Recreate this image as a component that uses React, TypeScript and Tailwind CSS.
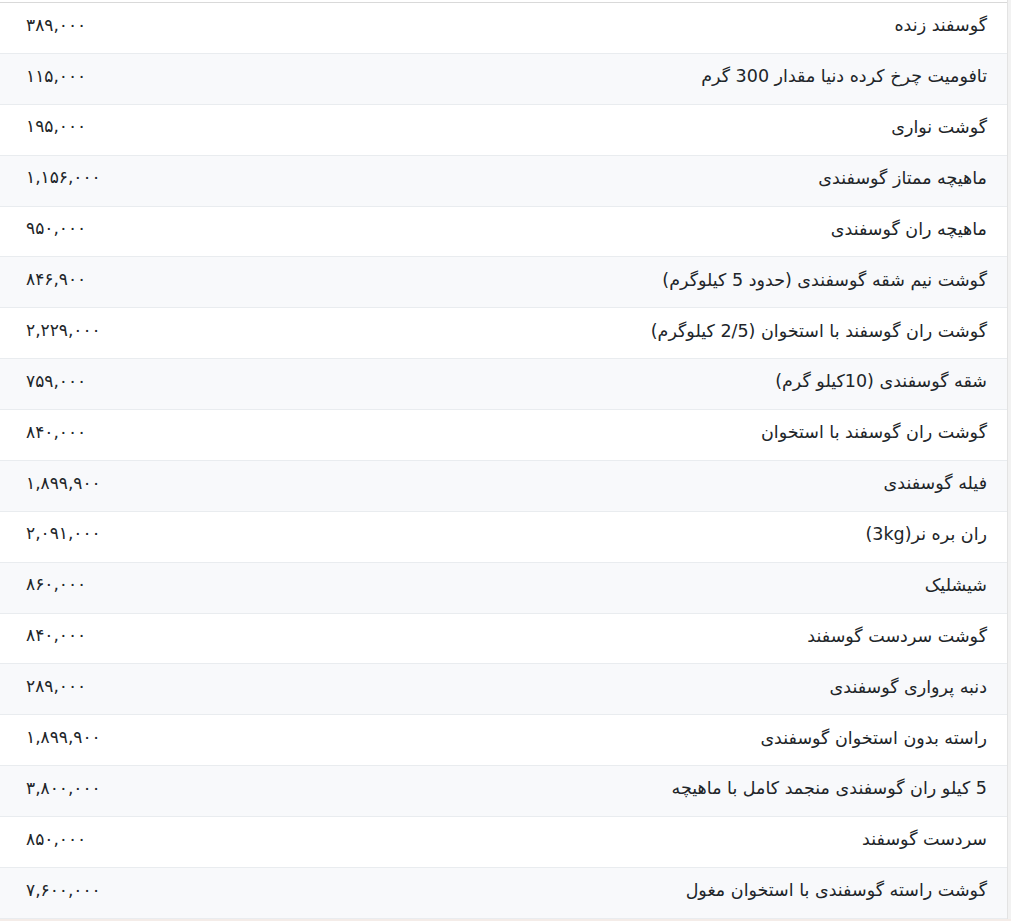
import React from 'react';

const rows: [string, string][] = [
  ['گوسفند زنده', '۳۸۹,۰۰۰'],
  ['تافومیت چرخ کرده دنیا مقدار 300 گرم', '۱۱۵,۰۰۰'],
  ['گوشت نواری', '۱۹۵,۰۰۰'],
  ['ماهیچه ممتاز گوسفندی', '۱,۱۵۶,۰۰۰'],
  ['ماهیچه ران گوسفندی', '۹۵۰,۰۰۰'],
  ['گوشت نیم شقه گوسفندی (حدود 5 کیلوگرم)', '۸۴۶,۹۰۰'],
  ['گوشت ران گوسفند با استخوان (2/5 کیلوگرم)', '۲,۲۲۹,۰۰۰'],
  ['شقه گوسفندی (10کیلو گرم)', '۷۵۹,۰۰۰'],
  ['گوشت ران گوسفند با استخوان', '۸۴۰,۰۰۰'],
  ['فیله گوسفندی', '۱,۸۹۹,۹۰۰'],
  ['ران بره نر(3kg)', '۲,۰۹۱,۰۰۰'],
  ['شیشلیک', '۸۶۰,۰۰۰'],
  ['گوشت سردست گوسفند', '۸۴۰,۰۰۰'],
  ['دنبه پرواری گوسفندی', '۲۸۹,۰۰۰'],
  ['راسته بدون استخوان گوسفندی', '۱,۸۹۹,۹۰۰'],
  ['5 کیلو ران گوسفندی منجمد کامل با ماهیچه', '۳,۸۰۰,۰۰۰'],
  ['سردست گوسفند', '۸۵۰,۰۰۰'],
  ['گوشت راسته گوسفندی با استخوان مغول', '۷,۶۰۰,۰۰۰'],
];

export default function App() {
  return (
    <div className="h-[921px] overflow-hidden bg-[#f4ece8] font-['DejaVu_Sans',sans-serif]">
      <div className="flex bg-[#f2f2f2]">
        <div className="w-[1008px] bg-white pt-[2px] border-r border-[#e3e3e3]">
          <div dir="rtl" className="border-t border-[#d9d9d9]">
            {rows.map(([name, price], i) => (
              <div
                key={i}
                className={`flex items-center justify-between h-[50.88px] pb-[5px] border-b border-[#e9ecef] text-[#212529] ${
                  i % 2 === 1 ? 'bg-[#f8f9fb]' : 'bg-white'
                }`}
              >
                <span className="pr-[20px] text-[17.5px]">{name}</span>
                <span className="pl-[26px] text-[17px]">{price}</span>
              </div>
            ))}
          </div>
        </div>
        <div className="flex-1" />
      </div>
    </div>
  );
}
